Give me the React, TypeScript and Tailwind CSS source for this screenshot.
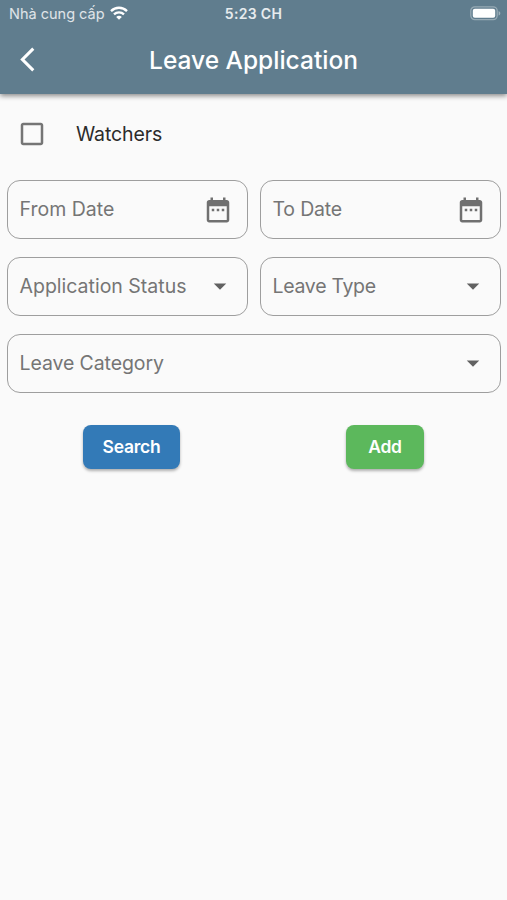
import React from 'react';
import clsx from 'clsx';

interface FieldProps {
  label: string;
  icon: 'date' | 'dropdown';
  className?: string;
}

const WifiIcon = () => (
  <svg width="18" height="14" viewBox="0 0 18 14" fill="none" stroke="white" strokeWidth="2.3" className="-mt-[2px]">
    <path d="M1 5.1C5.5.6 12.5.6 17 5.1" />
    <path d="M4 8.3c2.8-2.7 7.2-2.7 10 0" />
    <path d="M9 13.7 6.2 10.9c1.6-1.4 4-1.4 5.6 0z" fill="white" stroke="none" />
  </svg>
);

const BatteryIcon = () => (
  <svg width="32" height="15" viewBox="0 0 32 15" className="-mt-[2px]">
    <rect x="0.8" y="0.8" width="26.4" height="12.8" rx="4" fill="none" stroke="white" strokeOpacity="0.35" strokeWidth="1.3" />
    <rect x="2.8" y="2.7" width="22.4" height="9" rx="2" fill="white" />
    <path d="M28.6 5v4.6c1-.4 1.7-1.3 1.7-2.3S29.600 5.400 28.600 5z" fill="white" fillOpacity="0.4" />
  </svg>
);

const DateIcon = () => (
  <svg className="size-[30px] fill-[#707070]" viewBox="0 0 24 24">
    <path d="M9 11H7v2h2v-2zm4 0h-2v2h2v-2zm4 0h-2v2h2v-2zm2-7h-1V2h-2v2H8V2H6v2H5c-1.110 0-1.990.9-1.990 2L3 20c0 1.100.89 2 2 2h14c1.100 0 2-.9 2-2V6c0-1.100-.9-2-2-2zm0 16H5V9h14v11z" />
  </svg>
);

const DropdownIcon = () => (
  <svg className="mb-[2px] size-[30px] fill-[#616161]" viewBox="0 0 24 24">
    <path d="M7 10l5 5 5-5z" />
  </svg>
);

const Field: React.FC<FieldProps> = ({ label, icon, className }) => (
  <button
    type="button"
    className={clsx(
      'flex h-[59px] items-center justify-between rounded-[13px] border border-[#9e9e9e] pl-[11.5px] text-left text-[19.5px] text-[#757575]',
      icon === 'date' ? 'pr-[14px]' : 'pr-[12.5px]',
      className,
    )}
  >
    <span className="whitespace-nowrap">{label}</span>
    {icon === 'date' ? <DateIcon /> : <DropdownIcon />}
  </button>
);

export default function App() {
  return (
    <div className="min-h-screen w-full bg-[#fafafa] font-['Inter',sans-serif]">
      <header className="h-[94px] bg-[#607d8e] text-white shadow-[0_2px_5px_rgba(0,0,0,0.45)]">
        <div className="grid h-7 grid-cols-3 items-center px-[9px]">
          <div className="flex items-center gap-[5px] text-[14.5px] whitespace-nowrap text-white/80">
            <span>Nhà cung cấp</span>
            <WifiIcon />
          </div>
          <span className="pb-[2px] text-center text-[14px] font-semibold tracking-[0.3px] text-white/85">5:23 CH</span>
          <div className="-mr-1 flex justify-end">
            <BatteryIcon />
          </div>
        </div>
        <div className="grid h-16 grid-cols-[56px_1fr_56px] items-center">
          <button type="button" aria-label="Back" className="pb-px pl-5">
            <svg className="h-[29px] w-[15px] fill-white" viewBox="0 0 12 24">
              <path d="M11.670 3.870L9.900 2.100 0 12l9.900 9.900 1.770-1.770L3.540 12z" />
            </svg>
          </button>
          <h1 className="text-center text-[24.5px] font-medium whitespace-nowrap">Leave Application</h1>
        </div>
      </header>

      <main className="pt-[25px]">
        <label className="flex items-center gap-[29.5px] pl-[16.5px]">
          <svg className="size-[30px] fill-[#757575]" viewBox="0 0 24 24">
            <path d="M19 5v14H5V5h14m0-2H5c-1.100 0-2 .9-2 2v14c0 1.100.9 2 2 2h14c1.100 0 2-.9 2-2V5c0-1.100-.9-2-2-2z" />
          </svg>
          <span className="pt-px text-[19.5px] tracking-[-0.1px] text-[#2b2b2b]">Watchers</span>
        </label>

        <div className="mt-[31px] grid grid-cols-2 gap-x-3 gap-y-[18px] pr-[6px] pl-[7px]">
          <Field label="From Date" icon="date" />
          <Field label="To Date" icon="date" className="tracking-[-0.2px]" />
          <Field label="Application Status" icon="dropdown" />
          <Field label="Leave Type" icon="dropdown" className="tracking-[-0.3px]" />
          <Field label="Leave Category" icon="dropdown" className="col-span-2 tracking-[-0.1px]" />
        </div>

        <div className="mt-8 flex justify-around text-[17.5px] font-semibold text-white">
          <button
            type="button"
            className="h-11 w-[97px] rounded-lg bg-[#337ab7] tracking-[-0.25px] shadow-[0_2px_3px_rgba(0,0,0,0.3)]"
          >
            Search
          </button>
          <button
            type="button"
            className="h-11 w-[78px] rounded-lg bg-[#5cb85c] tracking-[-0.25px] shadow-[0_2px_3px_rgba(0,0,0,0.3)]"
          >
            Add
          </button>
        </div>
      </main>
    </div>
  );
}
